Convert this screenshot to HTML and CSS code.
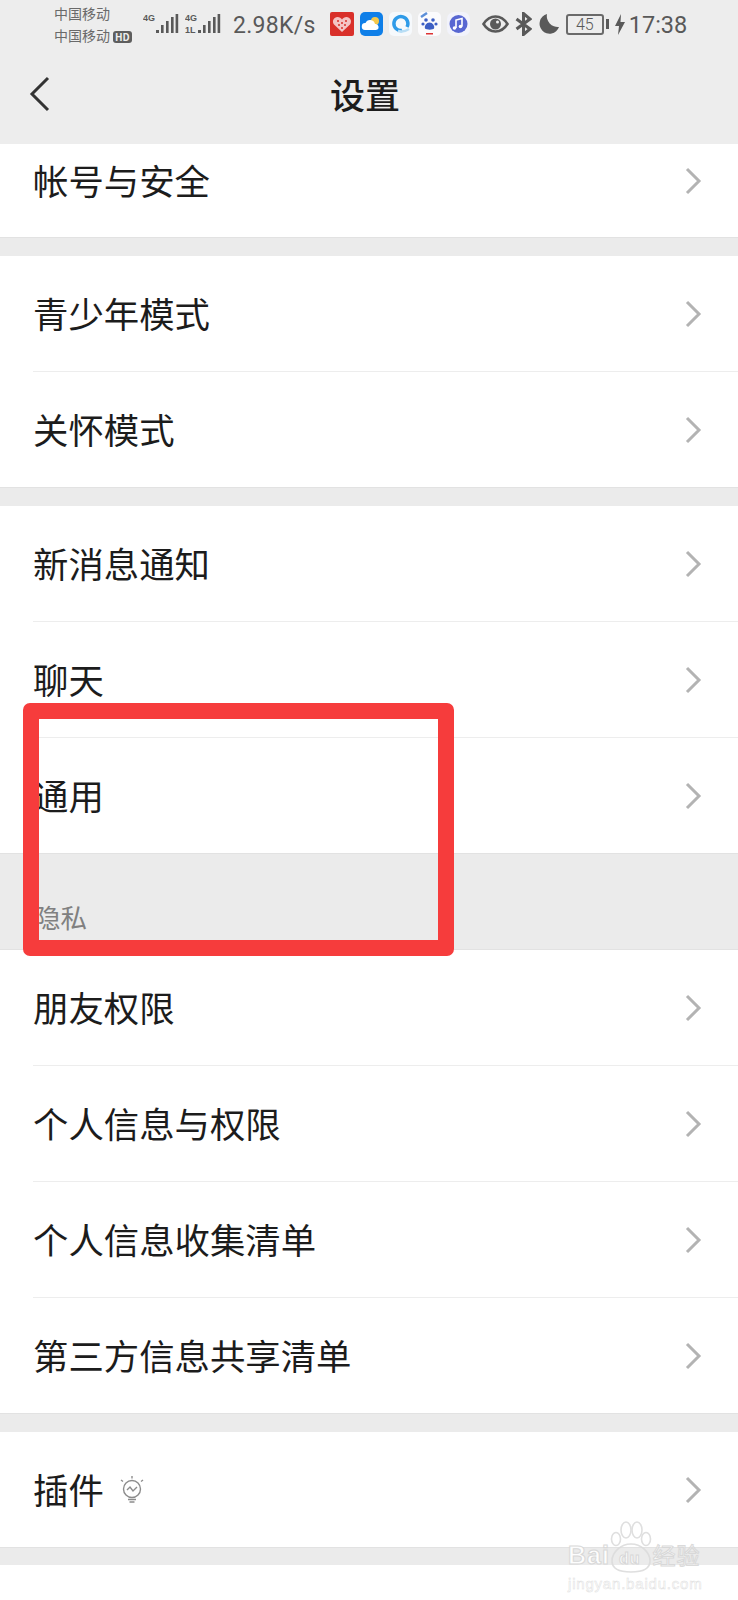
FILE: index.html
```html
<!DOCTYPE html>
<html lang="zh-CN">
<head>
  <meta charset="UTF-8">
  <title>设置</title>
  <link rel="stylesheet" href="styles.css">
</head>
<body>
  <div class="phone">
    <div class="top">
      <!-- Status bar -->
      <div class="status">
        <div class="carriers">
          <div>中国移动</div>
          <div>中国移动<span class="hd">HD</span></div>
        </div>
        <svg class="signal" width="36" height="24" viewBox="0 0 36 24">
          <text x="0" y="9" class="net">4G</text>
          <rect x="13" y="18" width="3" height="3"/><rect x="18" y="13" width="2.6" height="8"/><rect x="23" y="9" width="2.6" height="12"/><rect x="28" y="5" width="2.6" height="16"/><rect x="32.6" y="2" width="2.6" height="19"/>
        </svg>
        <svg class="signal sim2" width="36" height="24" viewBox="0 0 36 24">
          <text x="0" y="9" class="net">4G</text>
          <text x="0" y="21" class="net">1L</text>
          <rect x="13" y="18" width="3" height="3"/><rect x="18" y="13" width="2.6" height="8"/><rect x="23" y="9" width="2.6" height="12"/><rect x="28" y="5" width="2.6" height="16"/><rect x="32.6" y="2" width="2.6" height="19"/>
        </svg>
        <span class="speed">2.98K/s</span>
        <div class="apps">
          <svg width="24" height="24" viewBox="0 0 24 24"><rect width="24" height="24" rx="2" fill="#d9302a"/><path d="M12 20 4 12.500C1.500 9 4 5 7.500 5c2 0 3.500 1 4.500 2.500C13 6 14.500 5 16.500 5 20 5 22.500 9 20 12.500z" fill="#f4c4c4"/><g fill="#d9302a"><circle cx="8" cy="9" r="1"/><circle cx="12" cy="11" r="1"/><circle cx="16" cy="9" r="1"/><circle cx="9" cy="13" r="1"/><circle cx="15" cy="13" r="1"/><circle cx="12" cy="16" r="1"/></g></svg>
          <svg width="23" height="24" viewBox="0 0 23 24"><rect width="23" height="24" rx="5" fill="#0f7fe8"/><circle cx="15" cy="9" r="4" fill="#f5c84a"/><path d="M5 18a3.500 3.500 0 0 1 .5-7 5 5 0 0 1 9.500 1 3 3 0 0 1 1 6z" fill="#fff"/></svg>
          <svg width="23" height="24" viewBox="0 0 23 24"><rect width="23" height="24" rx="5" fill="#f6f9fc"/><path d="M18 15a7 7 0 1 0-5 3.500" fill="none" stroke="#2f9be8" stroke-width="3.500"/><path d="M9 19c4 1 8 0 11-2" fill="none" stroke="#b9def5" stroke-width="2.500"/></svg>
          <svg width="23" height="24" viewBox="0 0 23 24"><rect width="23" height="24" rx="5" fill="#fbfbfd"/><path d="M3 5l6-4" stroke="#5c8fd8" stroke-width="2.500"/><g fill="#3d5fc4"><circle cx="8" cy="8" r="1.800"/><circle cx="15" cy="8" r="1.800"/><circle cx="5" cy="12" r="1.600"/><circle cx="18" cy="12" r="1.600"/><path d="M11.500 10.500c3 0 5.500 3.500 4.500 6-1 1.500-7.500 1.500-9 0-1-2.500 1.500-6 4.500-6z"/></g><rect x="8" y="21" width="7" height="1.500" fill="#d33"/></svg>
          <svg width="23" height="24" viewBox="0 0 23 24"><rect width="23" height="24" rx="7" fill="#f2f3fb"/><circle cx="11.500" cy="12" r="9" fill="#5867d2"/><path d="M9 16V8l6-1.500v8" fill="none" stroke="#fff" stroke-width="1.600"/><circle cx="7.500" cy="16" r="1.800" fill="#fff"/><circle cx="13.500" cy="14.500" r="1.800" fill="#fff"/></svg>
        </div>
        <div class="sys">
          <svg width="27" height="18" viewBox="0 0 27 18"><path d="M1.500 9C5 3.500 9 1.500 13.500 1.500S22 3.500 25.500 9C22 14.500 18 16.500 13.500 16.500S5 14.500 1.500 9z" fill="none" stroke="#595959" stroke-width="2.600"/><circle cx="13.500" cy="9" r="5.500" fill="#595959"/><circle cx="15.500" cy="7" r="1.500" fill="#eee"/></svg>
          <svg width="17" height="24" viewBox="0 0 17 24"><path d="M1.500 7 15 17l-6.500 5.500v-21L15 7 1.500 17" fill="none" stroke="#595959" stroke-width="3"/></svg>
          <svg width="22" height="22" viewBox="0 0 22 22"><path d="M9 1a10 10 0 1 0 12 13A11 11 0 0 1 9 1z" fill="#595959"/></svg>
          <div class="battery">45</div>
          <span class="tip"></span>
          <svg class="bolt" width="10" height="21" viewBox="0 0 10 21"><path d="M6 0 0 12h4l-1 9 7-13H5.500z" fill="#595959"/></svg>
          <span class="clock">17:38</span>
        </div>
      </div>

      <!-- Nav bar -->
      <div class="nav">
        <svg class="back" width="22" height="38" viewBox="0 0 22 38"><path d="M19 3 3 19l16 16" fill="none" stroke="#333" stroke-width="3"/></svg>
        <h1>设置</h1>
      </div>
    </div>

    <div class="group first">
      <div class="row cut"><span>帐号与安全</span><svg class="arrow" width="17" height="28" viewBox="0 0 17 28"><path d="M2 2l12 12L2 26" fill="none" stroke="#b3b3b3" stroke-width="3"/></svg></div>
    </div>

    <div class="group">
      <div class="row"><span>青少年模式</span><svg class="arrow" width="17" height="28" viewBox="0 0 17 28"><path d="M2 2l12 12L2 26" fill="none" stroke="#b3b3b3" stroke-width="3"/></svg></div>
      <div class="row"><span>关怀模式</span><svg class="arrow" width="17" height="28" viewBox="0 0 17 28"><path d="M2 2l12 12L2 26" fill="none" stroke="#b3b3b3" stroke-width="3"/></svg></div>
    </div>

    <div class="group">
      <div class="row"><span>新消息通知</span><svg class="arrow" width="17" height="28" viewBox="0 0 17 28"><path d="M2 2l12 12L2 26" fill="none" stroke="#b3b3b3" stroke-width="3"/></svg></div>
      <div class="row"><span>聊天</span><svg class="arrow" width="17" height="28" viewBox="0 0 17 28"><path d="M2 2l12 12L2 26" fill="none" stroke="#b3b3b3" stroke-width="3"/></svg></div>
      <div class="row"><span>通用</span><svg class="arrow" width="17" height="28" viewBox="0 0 17 28"><path d="M2 2l12 12L2 26" fill="none" stroke="#b3b3b3" stroke-width="3"/></svg></div>
    </div>

    <div class="section-label">隐私</div>

    <div class="group flush">
      <div class="row"><span>朋友权限</span><svg class="arrow" width="17" height="28" viewBox="0 0 17 28"><path d="M2 2l12 12L2 26" fill="none" stroke="#b3b3b3" stroke-width="3"/></svg></div>
      <div class="row"><span>个人信息与权限</span><svg class="arrow" width="17" height="28" viewBox="0 0 17 28"><path d="M2 2l12 12L2 26" fill="none" stroke="#b3b3b3" stroke-width="3"/></svg></div>
      <div class="row"><span>个人信息收集清单</span><svg class="arrow" width="17" height="28" viewBox="0 0 17 28"><path d="M2 2l12 12L2 26" fill="none" stroke="#b3b3b3" stroke-width="3"/></svg></div>
      <div class="row"><span>第三方信息共享清单</span><svg class="arrow" width="17" height="28" viewBox="0 0 17 28"><path d="M2 2l12 12L2 26" fill="none" stroke="#b3b3b3" stroke-width="3"/></svg></div>
    </div>

    <div class="group">
      <div class="row">
        <span>插件</span>
        <svg class="bulb" width="24" height="28" viewBox="0 0 24 28"><g fill="none" stroke="#8c8c8c" stroke-width="1.400"><circle cx="12" cy="13" r="8.500"/><path d="M7 14l3-3 3 4 4-4"/><path d="M8 23.500h8M9.500 26h5M12 0v2.500M1 4l2 1.500M23 4l-2 1.500"/></g></svg>
        <svg class="arrow" width="17" height="28" viewBox="0 0 17 28"><path d="M2 2l12 12L2 26" fill="none" stroke="#b3b3b3" stroke-width="3"/></svg>
      </div>
    </div>

    <div class="tail"></div>

    <!-- Annotation and watermark sit over the screenshot -->
    <div class="mark"></div>
    <div class="watermark">
      <svg class="paw" width="46" height="56" viewBox="0 0 46 56"><g fill="none" stroke="#dcdcdc" stroke-width="1.600"><ellipse cx="18" cy="9" rx="5" ry="8"/><ellipse cx="29" cy="9" rx="5" ry="8"/><ellipse cx="38" cy="18" rx="4.500" ry="6.500"/><ellipse cx="8" cy="18" rx="4.500" ry="6.500"/><path d="M4 40c0-9 9-17 19-17s19 8 19 17-9 11-19 11S4 49 4 40z"/></g></svg>
      <div class="wm-top"><span>Bai</span><span class="wm-du">du</span><span class="wm-cn">经验</span></div>
      <div class="wm-url">jingyan.baidu.com</div>
    </div>
  </div>
</body>
</html>
```
FILE: styles.css
```css
/* Page */
html, body {
  margin: 0;
  background: #fff;
}
.phone {
  position: relative;
  width: 738px;
  height: 1600px;
  overflow: hidden;
  background: #ebebeb;
  font-family: "Noto Sans CJK SC", "Noto Sans", sans-serif;
  color: #1c1c1c;
}
.top {
  background: #ededed;
}

/* Status bar */
.status {
  display: flex;
  align-items: center;
  height: 48px;
  padding-left: 54px;
  color: #595959;
}
.carriers {
  width: 88px;
  margin-top: -1px;
  font-size: 14px;
  line-height: 22px;
  color: #6a6a6a;
}
.hd {
  display: inline-block;
  margin-left: 3px;
  padding: 0 2px;
  border-radius: 3px;
  background: #5e5e5e;
  color: #eee;
  font-size: 10px;
  line-height: 12px;
  font-weight: 700;
}
.signal {
  flex: none;
  margin-left: 1px;
  fill: #595959;
}
.sim2 {
  margin-left: 6px;
}
.net {
  font-family: "Liberation Sans", sans-serif;
  font-size: 9px;
  font-weight: 700;
}
.speed {
  margin: 2px 0 0 12px;
  font-family: Roboto, sans-serif;
  font-size: 23px;
  letter-spacing: 0.3px;
}
.apps {
  display: flex;
  gap: 6px;
  margin-left: 14px;
}
.sys {
  display: flex;
  align-items: center;
  margin-left: 12px;
}
.sys svg {
  margin-right: 6px;
}
.battery {
  width: 34px;
  height: 17px;
  border: 2px solid #6a6a6a;
  border-radius: 3px;
  font-family: Roboto, sans-serif;
  font-size: 16px;
  font-weight: 300;
  line-height: 17px;
  text-align: center;
}
.tip {
  width: 3px;
  height: 10px;
  margin: 0 6px 0 2px;
  background: #595959;
}
.sys .bolt {
  margin-right: 4px;
}
.clock {
  margin-top: 1px;
  font-family: Roboto, sans-serif;
  font-size: 23.500px;
}

/* Nav bar */
.nav {
  display: flex;
  align-items: center;
  height: 96px;
  padding-left: 29px;
}
.back {
  flex: none;
  margin-bottom: 4px;
}
.nav h1 {
  margin: 0 0 5px 279px;
  font-size: 35px;
  font-weight: 500;
  line-height: 1;
}

/* Setting groups */
.group {
  margin-top: 18px;
  background: #fff;
  border-bottom: 1px solid #e2e2e2;
}
.group.first {
  margin-top: 0;
}
.group.flush {
  margin-top: 0;
  border-top: 1px solid #e2e2e2;
}
.row {
  display: flex;
  align-items: center;
  box-sizing: border-box;
  height: 116px;
  margin-left: 33px;
  padding-right: 36px;
  border-bottom: 1px solid #ededed;
  font-size: 35.400px;
}
.row:last-child {
  height: 115px;
  border-bottom: 0;
}
.row.cut {
  height: 93px;
  padding-bottom: 20px;
}
.row span {
  flex: none;
  margin-bottom: 2px;
}
.arrow {
  flex: none;
  margin-left: auto;
}
.bulb {
  margin-left: 16px;
}
.section-label {
  display: flex;
  align-items: flex-end;
  height: 95px;
  box-sizing: border-box;
  padding: 0 0 14px 34px;
  font-size: 26.500px;
  line-height: 36px;
  color: #808080;
}
.tail {
  height: 36px;
  margin-top: 17px;
  background: #fff;
}

/* Red annotation box */
.mark {
  position: absolute;
  left: 23px;
  top: 703px;
  box-sizing: border-box;
  width: 431px;
  height: 253px;
  border: 16px solid #f63c3c;
  border-radius: 7px;
}

/* Baidu watermark */
.watermark {
  position: absolute;
  left: 568px;
  top: 1520px;
  width: 150px;
  color: #fff;
  opacity: 0.9;
  white-space: nowrap;
}
.paw {
  position: absolute;
  left: 40px;
  top: 1px;
}
.wm-top {
  display: flex;
  align-items: baseline;
  margin-top: 19px;
  font-family: "Liberation Sans", sans-serif;
  font-size: 25px;
  font-weight: 700;
  line-height: 30px;
  -webkit-text-stroke: 1px #d6d6d6;
  color: #fff;
}
.wm-top span {
  flex: none;
  letter-spacing: 1px;
}
.wm-du {
  margin-left: 9px;
  font-size: 16px;
}
.wm-cn {
  margin-left: 12px;
  font-family: "Noto Sans CJK SC", sans-serif;
  font-size: 23px;
  font-weight: 400;
}
.wm-url {
  margin-top: 1px;
  font-family: "Liberation Sans", sans-serif;
  font-size: 15px;
  line-height: 17px;
  letter-spacing: 0.800px;
  -webkit-text-stroke: 0.500px #dcdcdc;
}
```
